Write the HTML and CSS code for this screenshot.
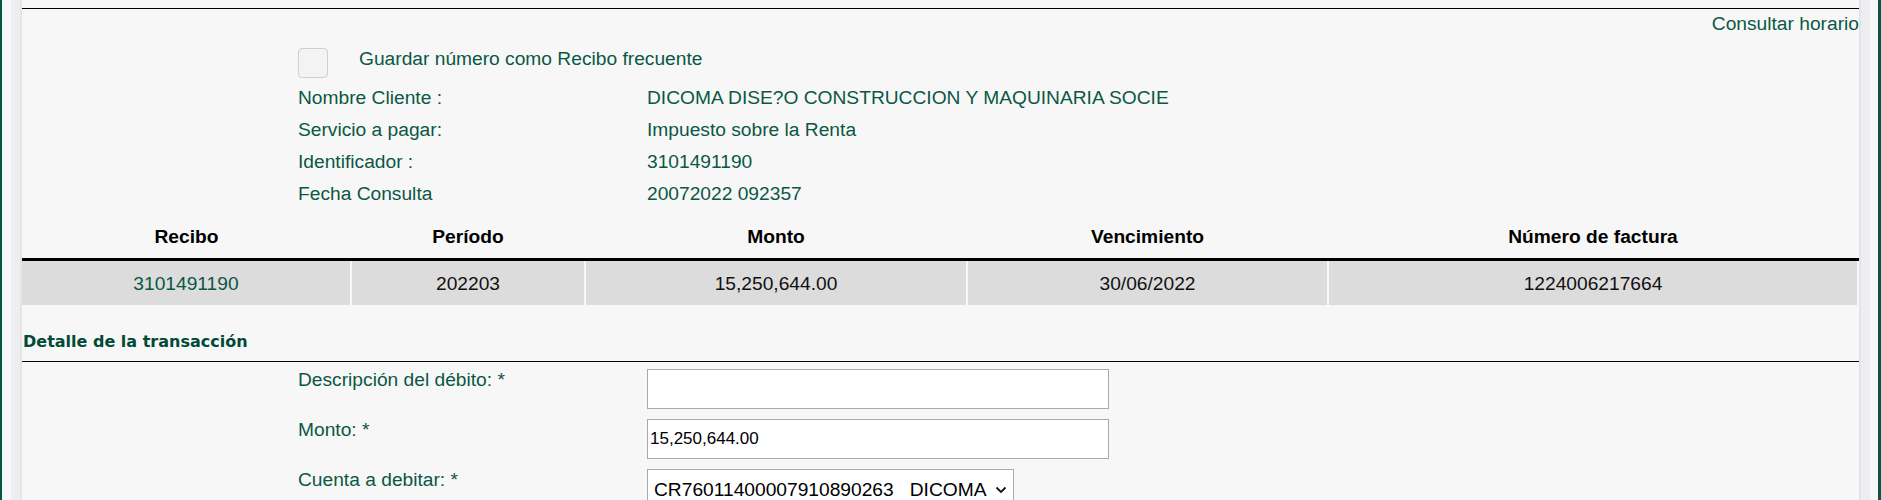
FILE: index.html
```html
<!DOCTYPE html>
<html lang="es">
<head>
<meta charset="utf-8">
<title>Pago de recibo</title>
<link rel="stylesheet" href="styles.css">
</head>
<body>
<div class="frame">
  <div class="edge edge-left"></div>
  <main class="content">
    <div class="panel">
      <div class="topbar"><a class="link" href="#">Consultar horario</a></div>
      <div class="info">
        <div class="save-row">
          <span class="checkbox"></span>
          <span class="save-label">Guardar número como Recibo frecuente</span>
        </div>
        <div class="info-grid">
          <span class="label">Nombre Cliente :</span><span class="value">DICOMA DISE?O CONSTRUCCION Y MAQUINARIA SOCIE</span>
          <span class="label">Servicio a pagar:</span><span class="value">Impuesto sobre la Renta</span>
          <span class="label">Identificador :</span><span class="value">3101491190</span>
          <span class="label">Fecha Consulta</span><span class="value">20072022 092357</span>
        </div>
      </div>
      <table class="bills">
        <colgroup>
          <col class="c1"><col class="c2"><col class="c3"><col class="c4"><col class="c5">
        </colgroup>
        <thead>
          <tr><th>Recibo</th><th>Período</th><th>Monto</th><th>Vencimiento</th><th>Número de factura</th></tr>
        </thead>
        <tbody>
          <tr><td class="id">3101491190</td><td>202203</td><td>15,250,644.00</td><td>30/06/2022</td><td>1224006217664</td></tr>
        </tbody>
      </table>
      <h3 class="section-title">Detalle de la transacción</h3>
      <div class="form">
        <div class="form-row">
          <label class="form-label">Descripción del débito: *</label>
          <input class="field" type="text" value="">
        </div>
        <div class="form-row">
          <label class="form-label">Monto: *</label>
          <input class="field amount" type="text" value="15,250,644.00">
        </div>
        <div class="form-row">
          <label class="form-label">Cuenta a debitar: *</label>
          <div class="select-wrap">
            <select class="account"><option>CR76011400007910890263&nbsp;&nbsp;&nbsp;DICOMA DISEÑO CONSTRUCCION</option></select>
            <svg class="chevron" width="12" height="8" viewBox="0 0 12 8" aria-hidden="true"><path d="M1.5 1.5 L6 6 L10.5 1.5" fill="none" stroke="#111" stroke-width="1.8"/></svg>
          </div>
        </div>
      </div>
    </div>
  </main>
  <div class="edge edge-right"></div>
</div>
</body>
</html>
```

FILE: styles.css
```css
* { box-sizing: border-box; }
html, body { margin: 0; padding: 0; }
body {
  background: #f7f7f7;
  font-family: "Liberation Sans", Arial, sans-serif;
  font-size: 19.2px;
  color: #0b5745;
  overflow: hidden;
}
.frame {
  display: flex;
  height: 500px;
  width: 1881px;
}
.edge-left {
  width: 22px;
  flex: none;
  border-left: 2px solid #0b5544;
  border-right: 2px solid #e4e4e6;
  background: linear-gradient(to right, #f7f7fa 0, #f7f7fa 9px, #eeeef2 9px, #eeeef2 18px);
}
.edge-right {
  width: 22px;
  flex: none;
  border-left: 2px solid #e4e4e6;
  border-right: 3px solid #0b5544;
  background: linear-gradient(to right, #eeeef2 0, #eeeef2 9px, #f7f7fa 9px);
}
.content {
  flex: 1;
  background: #f7f7f7;
  padding-top: 8px;
  min-width: 0;
}
.panel {
  border-top: 1px solid #000;
}
.topbar {
  height: 30px;
  padding-top: 4px;
  line-height: 22px;
  text-align: right;
}
.link {
  color: #0b5745;
  text-decoration: none;
}
.info {
  padding-left: 276px;
}
.save-row {
  display: flex;
  align-items: flex-start;
  margin-top: 9px;
  height: 30px;
}
.checkbox {
  width: 30px;
  height: 30px;
  border: 1px solid #cfcfcf;
  border-radius: 4px;
  background: #f3f3f3;
  flex: none;
}
.save-label {
  margin-left: 31px;
  line-height: 22px;
}
.info-grid {
  margin-top: 4px;
  display: grid;
  grid-template-columns: 349px 1fr;
  grid-auto-rows: 32px;
  align-items: center;
  line-height: 22px;
}
.bills {
  margin-top: 7px;
  width: 100%;
  border-collapse: collapse;
  table-layout: fixed;
}
.c1 { width: 329px; }
.c2 { width: 234px; }
.c3 { width: 382px; }
.c4 { width: 361px; }
.c5 { width: auto; }
.bills th {
  height: 42px;
  font-weight: bold;
  color: #000;
  text-align: center;
  vertical-align: middle;
  border-bottom: 3px solid #000;
  padding: 0;
}
.bills td {
  height: 46px;
  background: #dcdcdc;
  color: #111;
  text-align: center;
  vertical-align: middle;
  border-right: 2px solid #f7f7f7;
  padding: 3px 0 0;
}
.bills td.id { color: #0b5745; }
.section-title {
  margin: 0;
  margin-top: 27px;
  padding: 0 0 9px 1px;
  font-family: "DejaVu Sans", Verdana, sans-serif;
  font-size: 16px;
  line-height: 20px;
  font-weight: bold;
  color: #004a38;
  border-bottom: 1px solid #000;
}
.form {
  padding-top: 7px;
  padding-left: 276px;
}
.form-row {
  display: flex;
  align-items: flex-start;
  margin-bottom: 10px;
}
.form-label {
  width: 349px;
  flex: none;
  line-height: 22px;
}
.field {
  width: 462px;
  height: 40px;
  border: 1px solid #aaa;
  background: #fff;
  font-family: "Liberation Sans", Arial, sans-serif;
  font-size: 17px;
  color: #000;
  padding: 0 2px;
  margin: 0;
  outline: none;
}
.select-wrap {
  position: relative;
  width: 367px;
  height: 40px;
}
.account {
  -webkit-appearance: none;
  appearance: none;
  width: 367px;
  height: 40px;
  border: 1px solid #aaa;
  border-radius: 0;
  background: #fff;
  font-family: "Liberation Sans", Arial, sans-serif;
  font-size: 19.2px;
  color: #000;
  padding: 0 23px 0 6px;
  margin: 0;
}
.chevron {
  position: absolute;
  right: 7px;
  top: 17px;
  pointer-events: none;
}
```
